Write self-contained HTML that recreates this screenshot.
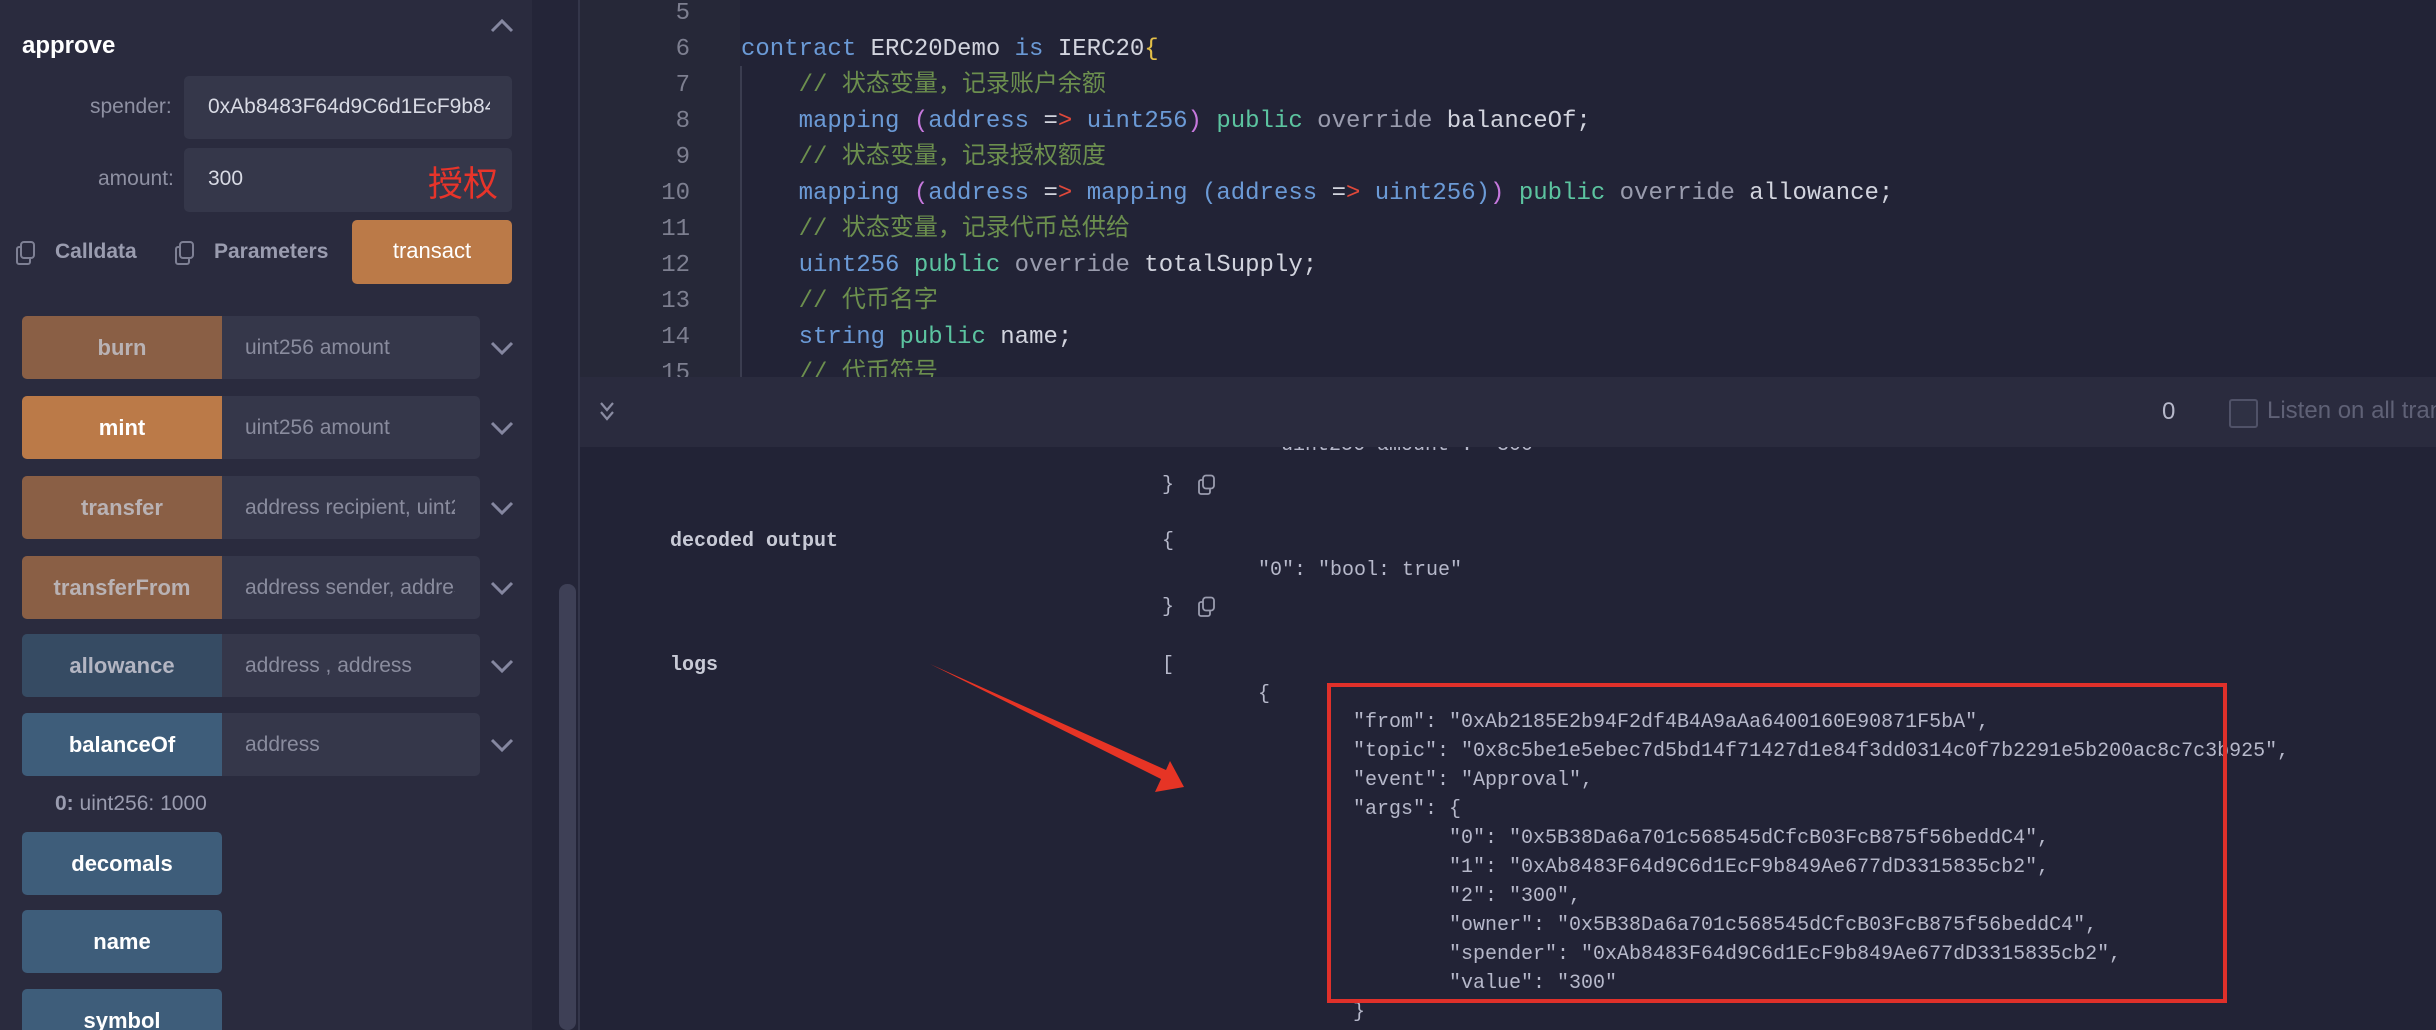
<!DOCTYPE html>
<html><head><meta charset="utf-8">
<style>
*{margin:0;padding:0;box-sizing:border-box}
html{width:2436px;height:1030px;overflow:hidden}
body{width:2436px;height:1030px;overflow:hidden;background:#222336;position:relative;font-family:"Liberation Sans","Noto Sans CJK SC",sans-serif}
.a{position:absolute;white-space:pre}
.lp{position:absolute;left:0;top:0;width:532px;height:1030px;background:#2a2b3e}
.strip{position:absolute;left:532px;top:0;width:48px;height:1030px;background:#242538;border-right:2px solid #34364a}
.thumb{position:absolute;left:559px;top:584px;width:17px;height:446px;background:#3e4056;border-radius:8px}
.inp{position:absolute;background:#35374a;border-radius:5px}
.lbl{font-size:21px;color:#8e90a2}
.row{position:absolute;left:22px;width:458px;height:63px;border-radius:5px;overflow:hidden;background:#35374a}
.row .b{position:absolute;left:0;top:0;width:200px;height:63px;font-weight:bold;font-size:22px;text-align:center;line-height:63px}
.row .p{position:absolute;left:223px;top:0;line-height:63px;font-size:21px;color:#8a8c9e;white-space:nowrap;width:210px;overflow:hidden}
.chev{position:absolute;left:490px;width:24px;height:16px}
.btn{position:absolute;left:22px;width:200px;height:63px;border-radius:5px;background:#3e5d7a;color:#fff;font-weight:bold;font-size:22px;text-align:center;line-height:63px;overflow:hidden}
.code{font-family:"Liberation Mono","Noto Sans CJK SC",monospace;font-size:24px;line-height:36px}
.ln{position:absolute;width:110px;left:580px;text-align:right;color:#7d7f90;font-family:"Liberation Mono",monospace;font-size:24px}
.k{color:#6b9ad6}.g{color:#5cc4a0}.o{color:#9a9cae}.i{color:#d2d4de}.c{color:#6c8f4e}.r{color:#e0483a}.pk{color:#c678dd}.y{color:#e5c048}
.t{font-family:"Liberation Mono",monospace;font-size:20px;color:#b6b8ca;position:absolute;white-space:pre;line-height:29px}
</style></head><body>
<div class="lp"></div>
<div class="strip"></div>
<div class="thumb"></div>

<div class="a" style="left:22px;top:32px;font-size:24px;font-weight:bold;color:#fff">approve</div>
<svg class="a" style="left:490px;top:18px" width="24" height="16" viewBox="0 0 24 16"><path d="M2 13 L12 3 L22 13" fill="none" stroke="#8587a0" stroke-width="3"/></svg>

<div class="a lbl" style="left:90px;top:95px">spender:</div>
<div class="inp" style="left:184px;top:76px;width:328px;height:63px"></div>
<div class="a" style="left:208px;top:95px;font-size:21px;color:#d8dae4;width:282px;overflow:hidden">0xAb8483F64d9C6d1EcF9b849Ae677dD3315835cb2</div>
<div class="a lbl" style="left:98px;top:167px">amount:</div>
<div class="inp" style="left:184px;top:148px;width:328px;height:64px"></div>
<div class="a" style="left:208px;top:167px;font-size:21px;color:#d8dae4">300</div>
<div class="a" style="left:428px;top:156px;font-size:35px;color:#e8342a;font-family:'Noto Sans CJK SC',sans-serif">授权</div>

<svg class="a" style="left:15px;top:240px" width="22" height="26" viewBox="0 0 22 26"><rect x="6" y="2" width="13" height="16" rx="3" fill="none" stroke="#7e8094" stroke-width="2"/><path d="M6 7 H4 a2 2 0 0 0 -2 2 V22 a2 2 0 0 0 2 2 H13 a2 2 0 0 0 2-2 V18" fill="none" stroke="#7e8094" stroke-width="2"/></svg>
<div class="a" style="left:55px;top:240px;font-size:21px;font-weight:bold;color:#9a9caf">Calldata</div>
<svg class="a" style="left:174px;top:240px" width="22" height="26" viewBox="0 0 22 26"><rect x="6" y="2" width="13" height="16" rx="3" fill="none" stroke="#7e8094" stroke-width="2"/><path d="M6 7 H4 a2 2 0 0 0 -2 2 V22 a2 2 0 0 0 2 2 H13 a2 2 0 0 0 2-2 V18" fill="none" stroke="#7e8094" stroke-width="2"/></svg>
<div class="a" style="left:214px;top:240px;font-size:21px;font-weight:bold;color:#9a9caf">Parameters</div>
<div class="a" style="left:352px;top:220px;width:160px;height:64px;background:#bb7a48;border-radius:5px;color:#fff;font-size:22px;text-align:center;line-height:62px">transact</div>

<div class="row" style="top:316px"><div class="b" style="background:#8a5f45;color:#b9b2b4">burn</div><div class="p">uint256 amount</div></div>
<div class="row" style="top:396px"><div class="b" style="background:#bb7a48;color:#fff">mint</div><div class="p">uint256 amount</div></div>
<div class="row" style="top:476px"><div class="b" style="background:#8a5f45;color:#b9b2b4">transfer</div><div class="p">address recipient, uint256 amount</div></div>
<div class="row" style="top:556px"><div class="b" style="background:#8a5f45;color:#b9b2b4">transferFrom</div><div class="p">address sender, address recipient</div></div>
<div class="row" style="top:634px"><div class="b" style="background:#364b63;color:#b3b5c2">allowance</div><div class="p">address , address</div></div>
<div class="row" style="top:713px"><div class="b" style="background:#3e5d7a;color:#fff">balanceOf</div><div class="p">address</div></div>
<svg class="chev" style="top:340px" viewBox="0 0 24 16"><path d="M2 3 L12 13 L22 3" fill="none" stroke="#8587a0" stroke-width="3"/></svg>
<svg class="chev" style="top:420px" viewBox="0 0 24 16"><path d="M2 3 L12 13 L22 3" fill="none" stroke="#8587a0" stroke-width="3"/></svg>
<svg class="chev" style="top:500px" viewBox="0 0 24 16"><path d="M2 3 L12 13 L22 3" fill="none" stroke="#8587a0" stroke-width="3"/></svg>
<svg class="chev" style="top:580px" viewBox="0 0 24 16"><path d="M2 3 L12 13 L22 3" fill="none" stroke="#8587a0" stroke-width="3"/></svg>
<svg class="chev" style="top:658px" viewBox="0 0 24 16"><path d="M2 3 L12 13 L22 3" fill="none" stroke="#8587a0" stroke-width="3"/></svg>
<svg class="chev" style="top:737px" viewBox="0 0 24 16"><path d="M2 3 L12 13 L22 3" fill="none" stroke="#8587a0" stroke-width="3"/></svg>
<div class="a" style="left:55px;top:792px;font-size:21px;color:#9a9caf"><b>0:</b> uint256: 1000</div>
<div class="btn" style="top:832px">decomals</div>
<div class="btn" style="top:910px">name</div>
<div class="btn" style="top:989px;height:41px;border-radius:5px 5px 0 0">symbol</div>

<!-- editor -->
<div class="a" style="left:580px;top:0;width:160px;height:377px;background:#262838"></div>
<div class="a" style="left:740px;top:66px;width:2px;height:311px;background:#3b3d50"></div>
<div class="ln" style="top:-4px;line-height:36px">5<br>6<br>7<br>8<br>9<br>10<br>11<br>12<br>13<br>14<br>15</div>
<div class="a code" style="left:741px;top:-4px"><br><span class="k">contract</span> <span class="i">ERC20Demo</span> <span class="k">is</span> <span class="i">IERC20</span><span class="y">{</span>
    <span class="c">// 状态变量，记录账户余额</span>
    <span class="k">mapping</span> <span class="pk">(</span><span class="k">address</span> <span class="i">=</span><span class="r">&gt;</span> <span class="k">uint256</span><span class="pk">)</span> <span class="g">public</span> <span class="o">override</span> <span class="i">balanceOf;</span>
    <span class="c">// 状态变量，记录授权额度</span>
    <span class="k">mapping</span> <span class="pk">(</span><span class="k">address</span> <span class="i">=</span><span class="r">&gt;</span> <span class="k">mapping</span> <span class="k">(address</span> <span class="i">=</span><span class="r">&gt;</span> <span class="k">uint256</span><span class="k">)</span><span class="pk">)</span> <span class="g">public</span> <span class="o">override</span> <span class="i">allowance;</span>
    <span class="c">// 状态变量，记录代币总供给</span>
    <span class="k">uint256</span> <span class="g">public</span> <span class="o">override</span> <span class="i">totalSupply;</span>
    <span class="c">// 代币名字</span>
    <span class="k">string</span> <span class="g">public</span> <span class="i">name;</span>
    <span class="c">// 代币符号</span></div>

<!-- terminal -->
<div class="a" style="left:580px;top:377px;width:1856px;height:70px;background:#2a2b3e"></div>
<svg class="a" style="left:598px;top:400px" width="18" height="24" viewBox="0 0 18 24"><path d="M3 3 L9 10 L15 3 M3 12 L9 19 L15 12" fill="none" stroke="#8a8ca2" stroke-width="2.2"/></svg>
<div class="a" style="left:2162px;top:398px;font-size:24px;color:#b6b8ca">0</div>
<div class="a" style="left:2229px;top:399px;width:29px;height:29px;border:2px solid #505268;border-radius:3px;background:#2f3144"></div>
<div class="a" style="left:2267px;top:397px;font-size:24px;color:#5f6176">Listen on all transactions</div>

<div style="position:absolute;left:580px;top:447px;width:1856px;height:583px;overflow:hidden">
<div class="t" style="left:689px;top:-16px">"uint256 amount": "300"</div>
</div>
<div class="t" style="left:1162px;top:471px">}</div>
<svg class="a" style="left:1197px;top:474px" width="19" height="22" viewBox="0 0 19 22"><rect x="6" y="1.5" width="11" height="13" rx="3" fill="none" stroke="#9a9caf" stroke-width="1.8"/><path d="M6 6 H4 a2 2 0 0 0 -2 2 V18 a2 2 0 0 0 2 2 H11 a2 2 0 0 0 2-2 V15" fill="none" stroke="#9a9caf" stroke-width="1.8"/></svg>
<div class="t" style="left:670px;top:527px;font-weight:bold;color:#c8cad6">decoded output</div>
<div class="t" style="left:1162px;top:527px">{</div>
<div class="t" style="left:1258px;top:556px">"0": "bool: true"</div>
<div class="t" style="left:1162px;top:593px">}</div>
<svg class="a" style="left:1197px;top:596px" width="19" height="22" viewBox="0 0 19 22"><rect x="6" y="1.5" width="11" height="13" rx="3" fill="none" stroke="#9a9caf" stroke-width="1.8"/><path d="M6 6 H4 a2 2 0 0 0 -2 2 V18 a2 2 0 0 0 2 2 H11 a2 2 0 0 0 2-2 V15" fill="none" stroke="#9a9caf" stroke-width="1.8"/></svg>
<div class="t" style="left:670px;top:651px;font-weight:bold;color:#c8cad6">logs</div>
<div class="t" style="left:1162px;top:651px">[</div>
<div class="t" style="left:1258px;top:680px">{</div>
<div class="t" style="left:1353px;top:708px">"from": "0xAb2185E2b94F2df4B4A9aAa6400160E90871F5bA",
"topic": "0x8c5be1e5ebec7d5bd14f71427d1e84f3dd0314c0f7b2291e5b200ac8c7c3b925",
"event": "Approval",
"args": {
        "0": "0x5B38Da6a701c568545dCfcB03FcB875f56beddC4",
        "1": "0xAb8483F64d9C6d1EcF9b849Ae677dD3315835cb2",
        "2": "300",
        "owner": "0x5B38Da6a701c568545dCfcB03FcB875f56beddC4",
        "spender": "0xAb8483F64d9C6d1EcF9b849Ae677dD3315835cb2",
        "value": "300"</div>
<div class="t" style="left:1353px;top:998px">}</div>

<div class="a" style="left:1327px;top:683px;width:900px;height:320px;border:4px solid #e0302a"></div>
<svg class="a" style="left:0;top:0" width="2436" height="1030"><polygon points="930,664 1166,770 1170,761 1184,787 1155,792 1161,779" fill="#e63425"/></svg>
</body></html>
